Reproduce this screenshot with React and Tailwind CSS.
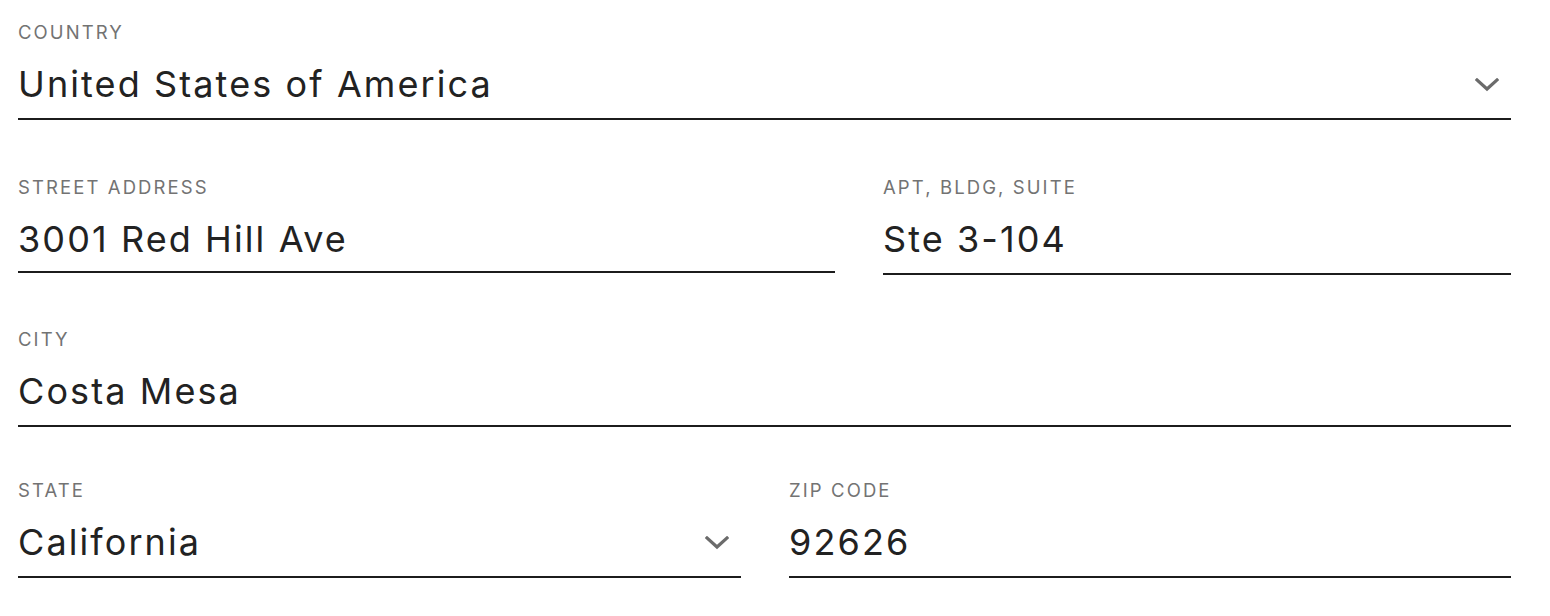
import React from "react";

function Chevron() {
  return (
    <svg width="24" height="14" viewBox="0 0 24 14" fill="none" className="shrink-0">
      <path d="M2 2 L12 11 L22 2" stroke="#6b6b6b" strokeWidth="3.2" strokeLinecap="square" strokeLinejoin="miter" />
    </svg>
  );
}

function Field({ label, value, select, className = "", pb = "pb-[12px]" }) {
  return (
    <div className={`flex flex-col ${className}`}>
      <div className="h-[22px] text-[18.5px] leading-[22px] tracking-[2.1px] text-[#737373] uppercase whitespace-nowrap">{label}</div>
      <div className={`mt-[19px] flex items-center justify-between border-b-2 border-[#1c1c1c] ${pb}`}>
        <div className="h-[44px] text-[36px] leading-[44px] tracking-[2.1px] text-[#222222] whitespace-nowrap">{value}</div>
        {select && (
          <div className="mr-[12px] mt-[2px]">
            <Chevron />
          </div>
        )}
      </div>
    </div>
  );
}

export default function App() {
  return (
    <div
      className="w-[1550px] h-[616px] bg-white pl-[18px] pr-[39px] pt-[21px]"
      style={{ fontFamily: "Inter, 'Liberation Sans', sans-serif" }}
    >
      <Field label="Country" value="United States of America" select />
      <div className="mt-[56px] grid grid-cols-[817px_1fr] gap-[48px]">
        <Field label="Street Address" value="3001 Red Hill Ave" pb="pb-[10px]" />
        <Field label="Apt, Bldg, Suite" value="Ste 3-104" />
      </div>
      <div className="mt-[53px]">
        <Field label="City" value="Costa Mesa" />
      </div>
      <div className="mt-[52px] grid grid-cols-[723px_1fr] gap-[48px]">
        <Field label="State" value="California" select />
        <Field label="Zip Code" value="92626" />
      </div>
    </div>
  );
}
